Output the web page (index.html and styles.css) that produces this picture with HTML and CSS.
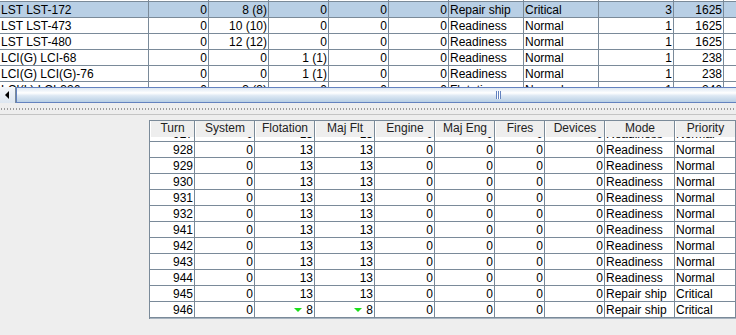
FILE: index.html
```html
<!DOCTYPE html>
<html lang="en">
<head>
    <meta charset="UTF-8">
    <title>Ship damage</title>
    <link rel="stylesheet" href="styles.css">
</head>
<body>
    <div class="split">
        <div class="top-pane">
            <div class="top-view">
                <div class="grid top-grid">
                    <div class="row">
                        <div class="c">LST LST-123</div><div class="c n">0</div><div class="c n">0</div><div class="c n">0</div><div class="c n">0</div><div class="c n">0</div><div class="c">Readiness</div><div class="c">Normal</div><div class="c n">1</div><div class="c n">1625</div><div class="c"></div>
                    </div>
                    <div class="row sel">
                        <div class="c">LST LST-172</div><div class="c n">0</div><div class="c n">8 (8)</div><div class="c n">0</div><div class="c n">0</div><div class="c n">0</div><div class="c">Repair ship</div><div class="c">Critical</div><div class="c n">3</div><div class="c n">1625</div><div class="c"></div>
                    </div>
                    <div class="row">
                        <div class="c">LST LST-473</div><div class="c n">0</div><div class="c n">10 (10)</div><div class="c n">0</div><div class="c n">0</div><div class="c n">0</div><div class="c">Readiness</div><div class="c">Normal</div><div class="c n">1</div><div class="c n">1625</div><div class="c"></div>
                    </div>
                    <div class="row">
                        <div class="c">LST LST-480</div><div class="c n">0</div><div class="c n">12 (12)</div><div class="c n">0</div><div class="c n">0</div><div class="c n">0</div><div class="c">Readiness</div><div class="c">Normal</div><div class="c n">1</div><div class="c n">1625</div><div class="c"></div>
                    </div>
                    <div class="row">
                        <div class="c">LCI(G) LCI-68</div><div class="c n">0</div><div class="c n">0</div><div class="c n">1 (1)</div><div class="c n">0</div><div class="c n">0</div><div class="c">Readiness</div><div class="c">Normal</div><div class="c n">1</div><div class="c n">238</div><div class="c"></div>
                    </div>
                    <div class="row">
                        <div class="c">LCI(G) LCI(G)-76</div><div class="c n">0</div><div class="c n">0</div><div class="c n">1 (1)</div><div class="c n">0</div><div class="c n">0</div><div class="c">Readiness</div><div class="c">Normal</div><div class="c n">1</div><div class="c n">238</div><div class="c"></div>
                    </div>
                    <div class="row">
                        <div class="c">LCI(L) LCI-326</div><div class="c n">0</div><div class="c n">3 (3)</div><div class="c n">0</div><div class="c n">0</div><div class="c n">0</div><div class="c">Flotation</div><div class="c">Normal</div><div class="c n">1</div><div class="c n">246</div><div class="c"></div>
                    </div>
                </div>
            </div>
            <div class="hscroll">
                <div class="arrow-btn">
                    <svg width="16" height="16" viewBox="0 0 16 16"><path d="M5 8 L9 4 L9 12 Z" fill="#000"/></svg>
                </div>
                <div class="track">
                    <div class="thumb"><span class="grip"></span></div>
                </div>
            </div>
        </div>

        <div class="divider"><div class="bumps"></div></div>

        <div class="bottom-pane">
            <div class="turns">
                <div class="grid head">
                    <div class="h">Turn</div><div class="h">System</div><div class="h">Flotation</div><div class="h">Maj Flt</div><div class="h">Engine</div><div class="h">Maj Eng</div><div class="h">Fires</div><div class="h">Devices</div><div class="h">Mode</div><div class="h">Priority</div>
                </div>
                <div class="body-view">
                    <div class="grid turn-grid">
                        <div class="row"><div class="c n">927</div><div class="c n">0</div><div class="c n">13</div><div class="c n">13</div><div class="c n">0</div><div class="c n">0</div><div class="c n">0</div><div class="c n">0</div><div class="c">Readiness</div><div class="c">Normal</div></div>
                        <div class="row"><div class="c n">928</div><div class="c n">0</div><div class="c n">13</div><div class="c n">13</div><div class="c n">0</div><div class="c n">0</div><div class="c n">0</div><div class="c n">0</div><div class="c">Readiness</div><div class="c">Normal</div></div>
                        <div class="row"><div class="c n">929</div><div class="c n">0</div><div class="c n">13</div><div class="c n">13</div><div class="c n">0</div><div class="c n">0</div><div class="c n">0</div><div class="c n">0</div><div class="c">Readiness</div><div class="c">Normal</div></div>
                        <div class="row"><div class="c n">930</div><div class="c n">0</div><div class="c n">13</div><div class="c n">13</div><div class="c n">0</div><div class="c n">0</div><div class="c n">0</div><div class="c n">0</div><div class="c">Readiness</div><div class="c">Normal</div></div>
                        <div class="row"><div class="c n">931</div><div class="c n">0</div><div class="c n">13</div><div class="c n">13</div><div class="c n">0</div><div class="c n">0</div><div class="c n">0</div><div class="c n">0</div><div class="c">Readiness</div><div class="c">Normal</div></div>
                        <div class="row"><div class="c n">932</div><div class="c n">0</div><div class="c n">13</div><div class="c n">13</div><div class="c n">0</div><div class="c n">0</div><div class="c n">0</div><div class="c n">0</div><div class="c">Readiness</div><div class="c">Normal</div></div>
                        <div class="row"><div class="c n">941</div><div class="c n">0</div><div class="c n">13</div><div class="c n">13</div><div class="c n">0</div><div class="c n">0</div><div class="c n">0</div><div class="c n">0</div><div class="c">Readiness</div><div class="c">Normal</div></div>
                        <div class="row"><div class="c n">942</div><div class="c n">0</div><div class="c n">13</div><div class="c n">13</div><div class="c n">0</div><div class="c n">0</div><div class="c n">0</div><div class="c n">0</div><div class="c">Readiness</div><div class="c">Normal</div></div>
                        <div class="row"><div class="c n">943</div><div class="c n">0</div><div class="c n">13</div><div class="c n">13</div><div class="c n">0</div><div class="c n">0</div><div class="c n">0</div><div class="c n">0</div><div class="c">Readiness</div><div class="c">Normal</div></div>
                        <div class="row"><div class="c n">944</div><div class="c n">0</div><div class="c n">13</div><div class="c n">13</div><div class="c n">0</div><div class="c n">0</div><div class="c n">0</div><div class="c n">0</div><div class="c">Readiness</div><div class="c">Normal</div></div>
                        <div class="row"><div class="c n">945</div><div class="c n">0</div><div class="c n">13</div><div class="c n">13</div><div class="c n">0</div><div class="c n">0</div><div class="c n">0</div><div class="c n">0</div><div class="c">Repair ship</div><div class="c">Critical</div></div>
                        <div class="row"><div class="c n">946</div><div class="c n">0</div><div class="c n"><svg class="drop" width="8" height="5" viewBox="0 0 8 5"><path d="M0 0 H8 L4 4 Z" fill="#1be01b"/></svg>8</div><div class="c n"><svg class="drop" width="8" height="5" viewBox="0 0 8 5"><path d="M0 0 H8 L4 4 Z" fill="#1be01b"/></svg>8</div><div class="c n">0</div><div class="c n">0</div><div class="c n">0</div><div class="c n">0</div><div class="c">Repair ship</div><div class="c">Critical</div></div>
                    </div>
                </div>
            </div>
        </div>
    </div>
</body>
</html>
```

FILE: styles.css
```css
html, body {
    margin: 0;
    padding: 0;
}
body {
    width: 736px;
    height: 335px;
    overflow: hidden;
    background-color: #eeeeee;
    font-family: "Liberation Sans", Arial, sans-serif;
    font-size: 12px;
    color: #000;
}
.split {
    display: flex;
    flex-direction: column;
}

/* upper table */
.top-view {
    height: 87px;
    overflow: hidden;
    background: #fff;
}
.top-grid {
    margin-top: -14px;
}
.top-grid .row {
    display: grid;
    grid-template-columns: 149px 60px 60px 60px 60px 60px 75px 75px 75px 50px 100px;
}
.row.sel {
    background-color: #b8cfe5;
}
.c {
    box-sizing: border-box;
    height: 16px;
    padding: 2px 1px 0 1px;
    line-height: 13px;
    border-right: 1px solid #7a8a99;
    border-bottom: 1px solid #7a8a99;
    white-space: nowrap;
    overflow: hidden;
}
.n {
    text-align: right;
}

/* scrollbar */
.hscroll {
    display: flex;
    height: 16px;
    background: #eeeeee;
}
.arrow-btn {
    box-sizing: border-box;
    width: 16px;
    height: 16px;
    flex: none;
    background: linear-gradient(#f4f7fb, #dde6f0);
    border-right: 1px solid #7a8a99;
}
.arrow-btn svg {
    display: block;
}
.track {
    flex: 1;
    overflow: hidden;
}
.thumb {
    box-sizing: border-box;
    width: 970px;
    height: 16px;
    border: 1px solid #6382bf;
    border-right: none;
    background: linear-gradient(#dde8f3 0%, #ffffff 35%, #dde8f3 55%, #b8cfe5 100%);
    position: relative;
}
.grip {
    position: absolute;
    left: 479px;
    top: 3px;
    width: 5px;
    height: 8px;
    background: repeating-linear-gradient(90deg, #6382bf 0 1px, #ffffff 1px 2px);
}

/* split divider */
.divider {
    height: 11px;
    display: flex;
    align-items: center;
    border-bottom: 1px solid #c4c4c4;
}
.bumps {
    flex: 1;
    height: 2px;
    background-image:
        radial-gradient(circle, #9a9a9a 0.6px, transparent 0.7px);
    background-size: 3px 2px;
}

/* lower table */
.bottom-pane {
    padding: 5px 0 0 149px;
}
.turns {
    border-left: 1px solid #7a8a99;
    width: 587px;
}
.head {
    display: grid;
    grid-template-columns: 45px 60px 60px 60px 60px 60px 50px 60px 70px 61px;
    height: 17px;
    border-top: 1px solid #7a8a99;
    box-sizing: border-box;
    background: #eeeeee;
}
.h {
    box-sizing: border-box;
    border-right: 1px solid #7a8a99;
    border-left: 1px solid #ffffff;
    text-align: center;
    line-height: 15px;
    color: #222;
    white-space: nowrap;
}
.body-view {
    height: 181px;
    overflow: hidden;
    background: #fff;
    border-bottom: 1px solid #a8b4c0;
}
.turn-grid {
    margin-top: -11px;
}
.turn-grid .row {
    display: grid;
    grid-template-columns: 45px 60px 60px 60px 60px 60px 50px 60px 70px 61px;
}
.drop {
    margin-right: 4px;
    vertical-align: 1px;
}
```
